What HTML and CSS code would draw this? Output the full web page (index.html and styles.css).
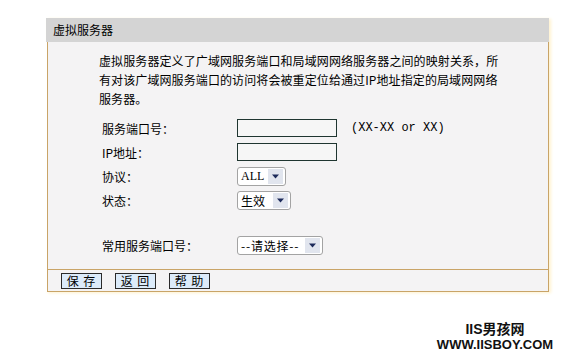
FILE: index.html
```html
<!DOCTYPE html>
<html lang="zh-CN">
<head>
<meta charset="UTF-8" />
<title>虚拟服务器</title>
<link rel="stylesheet" href="styles.css">
</head>
<body>

<div class="panel">
  <div class="panel-title">虚拟服务器</div>
  <div class="panel-body">
    <p class="desc">虚拟服务器定义了广域网服务端口和局域网网络服务器之间的映射关系，所<br>有对该广域网服务端口的访问将会被重定位给通过IP地址指定的局域网网络<br>服务器。</p>

    <div class="form">
      <div class="row">
        <label>服务端口号：</label>
        <input type="text" class="field">
        <span class="hint">(XX-XX or XX)</span>
      </div>
      <div class="row">
        <label>IP地址：</label>
        <input type="text" class="field">
      </div>
      <div class="row">
        <label>协议：</label>
        <div class="select">
          <span class="select-text">ALL</span>
          <span class="select-btn"><svg width="9" height="5" viewBox="0 0 9 5"><path d="M1 0.5h7L4.5 4.5z" fill="#1c2a5a"/></svg></span>
        </div>
      </div>
      <div class="row">
        <label>状态：</label>
        <div class="select">
          <span class="select-text wide">生效</span>
          <span class="select-btn"><svg width="9" height="5" viewBox="0 0 9 5"><path d="M1 0.5h7L4.5 4.5z" fill="#1c2a5a"/></svg></span>
        </div>
      </div>
      <div class="row common">
        <label>常用服务端口号：</label>
        <div class="select">
          <span class="select-text choose">--请选择--</span>
          <span class="select-btn"><svg width="9" height="5" viewBox="0 0 9 5"><path d="M1 0.5h7L4.5 4.5z" fill="#1c2a5a"/></svg></span>
        </div>
      </div>
    </div>
  </div>
  <div class="panel-foot">
    <button>保 存</button>
    <button>返 回</button>
    <button>帮 助</button>
  </div>
</div>

<div class="watermark">
  <div class="wm-1">IIS男孩网</div>
  <div class="wm-2">WWW.IISBOY.COM</div>
</div>

</body>
</html>
```

FILE: styles.css
```css
body {
  margin: 0;
  background: #fff;
  font-family: "Noto Sans CJK SC", "DejaVu Sans", sans-serif;
  font-size: 12px;
  color: #000;
}

.panel {
  margin: 18px 0 0 46px;
  width: 503px;
  box-shadow: 2px 1px 3px #fff2cf;
}

.panel-title {
  background: #d4d4d4;
  height: 24px;
  line-height: 24px;
  padding-left: 7px;
}

.panel-body {
  background: #f4f3f4;
  border-left: 1px solid #c9a467;
  border-right: 1px solid #c9a467;
  margin-left: 1px;
  height: 227px;
  padding-left: 51px;
  box-sizing: border-box;
  padding-top: 9px;
}

.desc {
  margin: 0;
  line-height: 19px;
  letter-spacing: 0.1px;
}

.form {
  margin-top: 8px;
  padding-left: 3px;
}

.row {
  display: flex;
  align-items: center;
  height: 24px;
}

.row label {
  width: 135px;
}

.row.common {
  margin-top: 21px;
}

.field {
  width: 100px;
  height: 18px;
  box-sizing: border-box;
  border: 1px solid #1f3530;
  background: #f6f6f6;
  margin: 0;
  padding: 0;
}

.hint {
  margin-left: 14px;
  font-family: "Liberation Mono", monospace;
  font-size: 12px;
}

.select {
  display: flex;
  align-items: center;
  height: 19px;
  box-sizing: border-box;
  border: 1px solid #a3a3a3;
  border-radius: 3px;
  background: #fff;
  padding: 0 2px 0 3px;
}

.select-text {
  font-family: "Liberation Serif", "Noto Sans CJK SC", serif;
  padding-right: 4px;
}

.select-text.wide {
  font-family: "Noto Sans CJK SC", sans-serif;
  padding-right: 8px;
}

.select-text.choose {
  font-family: "Noto Sans CJK SC", sans-serif;
  letter-spacing: 0.8px;
  padding-right: 6px;
}

.select-btn {
  width: 15px;
  height: 15px;
  background: #e1e5ee;
  display: flex;
  align-items: center;
  justify-content: center;
}

.panel-foot {
  margin-left: 1px;
  background: #f4f3f4;
  border: 1px solid #c9a467;
  height: 23px;
  box-sizing: border-box;
  display: flex;
  align-items: center;
  padding-left: 13px;
  gap: 13px;
}

.panel-foot button {
  width: 41px;
  height: 16px;
  padding: 0;
  background: #dcebfa;
  border: 1px solid #2a2a2a;
  font-family: "Noto Sans CJK SC", sans-serif;
  font-size: 12px;
  line-height: 14px;
  letter-spacing: 1px;
}

.watermark {
  margin: 29px 0 0 432px;
  width: 126px;
  text-align: center;
  font-family: "Liberation Sans", "Noto Sans CJK SC", sans-serif;
  font-weight: bold;
  color: #111;
}

.wm-1 {
  font-size: 14px;
  line-height: 16px;
}

.wm-2 {
  font-size: 13px;
  line-height: 16px;
}
```
